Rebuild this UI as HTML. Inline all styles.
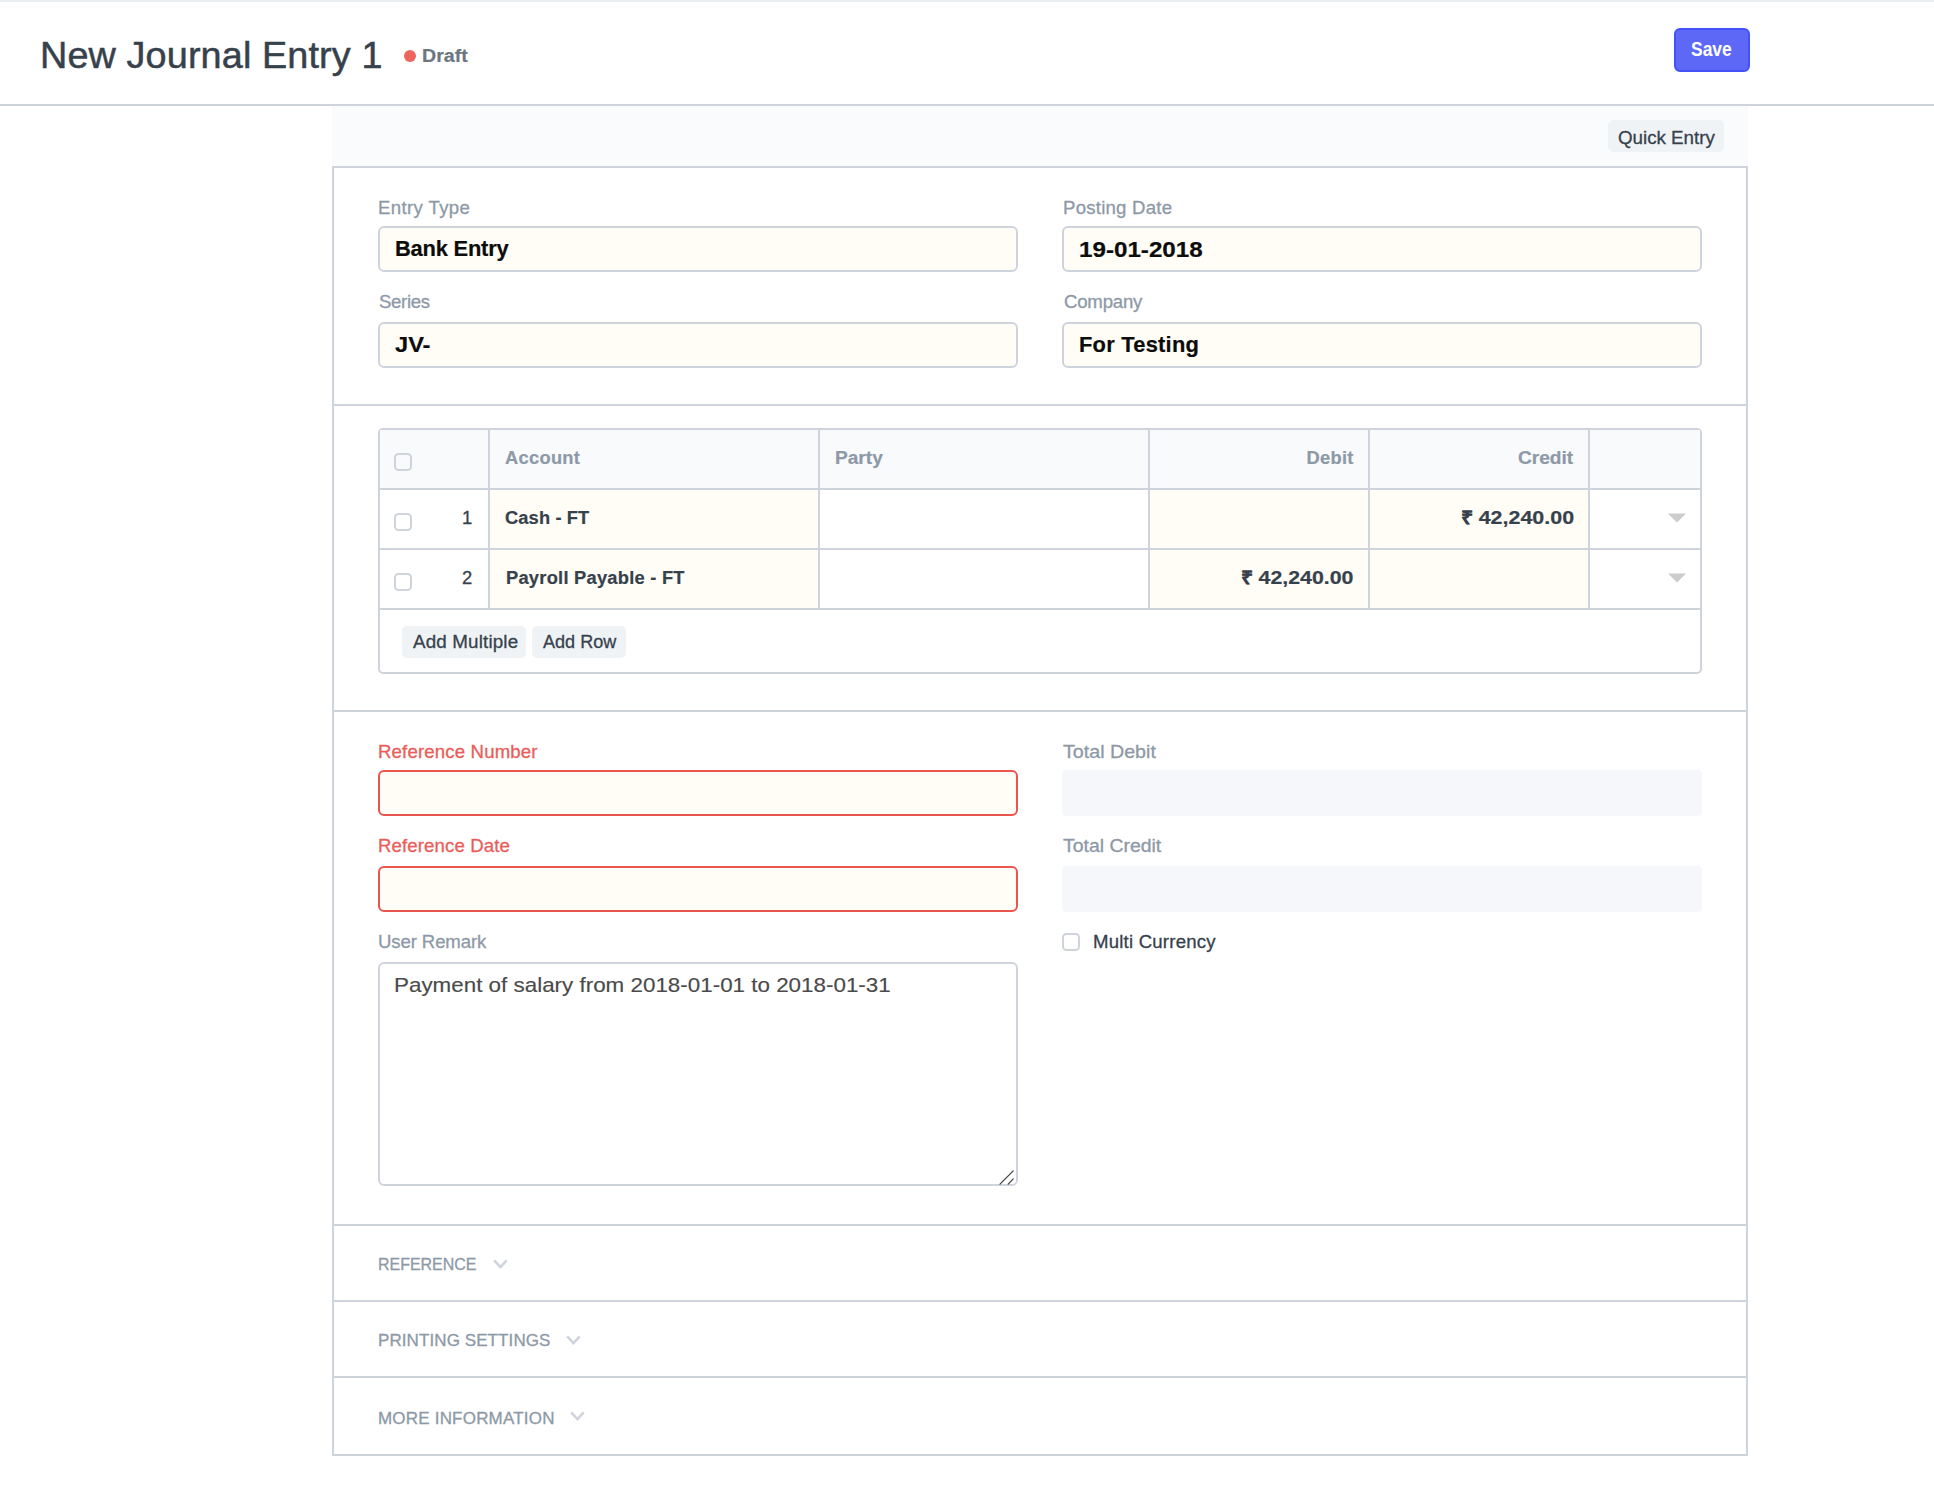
<!DOCTYPE html>
<html lang="en">
<head>
<meta charset="utf-8">
<title>New Journal Entry 1</title>
<style>
*{box-sizing:border-box;margin:0;padding:0}
html,body{width:1934px;height:1498px;background:#fff;overflow:hidden}
body{position:relative;font-family:"Liberation Sans",sans-serif;color:#36414c;-webkit-font-smoothing:antialiased}
.a{position:absolute;white-space:nowrap}
.lbl,.btxt,.num,.sec{-webkit-text-stroke:0.3px currentColor}
#rem{-webkit-text-stroke:0.15px currentColor}
.val,.th,.td,#draft{-webkit-text-stroke:0.2px currentColor}
#title{-webkit-text-stroke:0.5px currentColor}
.hl{position:absolute;height:2px;background:#cfd4dc}
.vl{position:absolute;width:2px;background:#cfd4dc}
.lbl{position:absolute;white-space:nowrap;font-size:18.2px;line-height:24px;color:#8d99a6}
.lbl.err{color:#ea5d59}
.inp{position:absolute;height:46px;width:640px;border:2px solid #cfd4dc;border-radius:6px;background:#fffdf5}
.inp.err{border-color:#e9554f}
.inp.ro{border:0;background:#f5f7fa;border-radius:4px}
.val{position:absolute;white-space:nowrap;font-size:20.3px;line-height:26px;font-weight:bold;color:#0c0c0c}
.btn{position:absolute;height:32px;border-radius:5px;background:#f0f3f6}
.btxt{position:absolute;white-space:nowrap;font-size:18.2px;line-height:24px;color:#36414c}
.cb{position:absolute;width:18px;height:18px;border:2px solid #cfd4dc;border-radius:4.5px;background:transparent}
.th{position:absolute;white-space:nowrap;font-size:17.8px;line-height:24px;font-weight:bold;color:#8d99a6}
.td{position:absolute;white-space:nowrap;font-size:17.8px;line-height:24px;font-weight:bold;color:#36414c}
.num{position:absolute;white-space:nowrap;font-size:18.2px;line-height:24px;color:#36414c}
.sec{position:absolute;white-space:nowrap;font-size:16.4px;line-height:22px;color:#8d99a6}
.cell{position:absolute;background:#fffdf5}
svg{position:absolute;overflow:visible}
</style>
</head>
<body>
<!-- top strip -->
<div class="a" style="left:0;top:0;width:1934px;height:2px;background:#ebeef1"></div>

<!-- page header -->
<div class="a" id="title" style="left:40px;top:33px;font-size:37.8px;letter-spacing:0.12px;line-height:44px;color:#36414c">New Journal Entry 1</div>
<div class="a" style="left:404px;top:50px;width:12px;height:12px;border-radius:50%;background:#ec645e"></div>
<div class="a" id="draft" style="left:422px;top:44px;font-size:18.3px;transform-origin:0 0;transform:scaleX(1.0715);line-height:24px;font-weight:bold;color:#6c7680">Draft</div>
<div class="a" style="left:1674px;top:28px;width:76px;height:44px;border:2px solid #4450f8;border-radius:6px;background:#5d69f6"></div>
<div class="a" id="save" style="left:1691px;top:37px;font-size:19.6px;transform-origin:0 0;transform:scaleX(0.8913);line-height:24px;font-weight:bold;color:#fff">Save</div>
<div class="hl" style="left:0;top:104px;width:1934px"></div>

<!-- toolbar -->
<div class="a" style="left:332px;top:106px;width:1416px;height:60px;background:#fafbfc"></div>
<div class="btn" style="left:1608px;top:120px;width:116px"></div>
<div class="btxt" id="qe" style="left:1618px;top:126px;font-size:18.8px;letter-spacing:-0.02px">Quick Entry</div>

<!-- form frame -->
<div class="hl" style="left:332px;top:166px;width:1416px"></div>
<div class="vl" style="left:332px;top:166px;height:1290px"></div>
<div class="vl" style="left:1746px;top:166px;height:1290px"></div>
<div class="hl" style="left:332px;top:404px;width:1416px"></div>
<div class="hl" style="left:332px;top:710px;width:1416px"></div>
<div class="hl" style="left:332px;top:1224px;width:1416px"></div>
<div class="hl" style="left:332px;top:1300px;width:1416px"></div>
<div class="hl" style="left:332px;top:1376px;width:1416px"></div>
<div class="hl" style="left:332px;top:1454px;width:1416px"></div>

<!-- section 1 -->
<div class="lbl" id="l1" style="left:378px;top:196px;font-size:18.6px;letter-spacing:0.37px">Entry Type</div>
<div class="inp" style="left:378px;top:226px"></div>
<div class="val" id="v1" style="left:395px;top:236px;font-size:21.9px;letter-spacing:-0.21px">Bank Entry</div>
<div class="lbl" id="l2" style="left:1063px;top:196px;font-size:18.6px;letter-spacing:0.23px">Posting Date</div>
<div class="inp" style="left:1062px;top:226px"></div>
<div class="val" id="v2" style="left:1079px;top:237px;font-size:21.9px;transform-origin:0 0;transform:scaleX(1.1045)">19-01-2018</div>
<div class="lbl" id="l3" style="left:379px;top:290px;font-size:18.6px;letter-spacing:-0.34px">Series</div>
<div class="inp" style="left:378px;top:322px"></div>
<div class="val" id="v3" style="left:395px;top:332px;font-size:21.9px;transform-origin:0 0;transform:scaleX(1.0788)">JV-</div>
<div class="lbl" id="l4" style="left:1064px;top:290px;font-size:18.6px;letter-spacing:-0.2px">Company</div>
<div class="inp" style="left:1062px;top:322px"></div>
<div class="val" id="v4" style="left:1079px;top:332px;font-size:21.9px;letter-spacing:0.23px">For Testing</div>

<!-- grid -->
<div class="a" style="left:378px;top:428px;width:1324px;height:246px;border:2px solid #cfd4dc;border-radius:5px;background:#fff"></div>
<div class="a" style="left:380px;top:430px;width:1320px;height:58px;background:#f9fafc;border-radius:1px 1px 0 0"></div>
<div class="cell" style="left:490px;top:490px;width:328px;height:118px"></div>
<div class="cell" style="left:1150px;top:490px;width:438px;height:118px"></div>
<div class="hl" style="left:380px;top:488px;width:1320px"></div>
<div class="hl" style="left:380px;top:548px;width:1320px"></div>
<div class="hl" style="left:380px;top:608px;width:1320px"></div>
<div class="vl" style="left:488px;top:430px;height:178px"></div>
<div class="vl" style="left:818px;top:430px;height:178px"></div>
<div class="vl" style="left:1148px;top:430px;height:178px"></div>
<div class="vl" style="left:1368px;top:430px;height:178px"></div>
<div class="vl" style="left:1588px;top:430px;height:178px"></div>

<div class="cb" style="left:394px;top:453px"></div>
<div class="cb" style="left:394px;top:513px"></div>
<div class="cb" style="left:394px;top:573px"></div>
<div class="th" id="h1" style="left:505px;top:446px;font-size:18.3px;letter-spacing:0.3px">Account</div>
<div class="th" id="h2" style="left:835px;top:446px;font-size:18.3px;transform-origin:0 0;transform:scaleX(1.0446)">Party</div>
<div class="th" id="h3" style="left:1306.55px;top:446px;font-size:18.3px;letter-spacing:0.3px">Debit</div>
<div class="th" id="h4" style="left:1517.61px;top:446px;font-size:18.3px;transform-origin:0 0;transform:scaleX(1.0453)">Credit</div>
<div class="num" id="n1" style="left:461.88px;top:506px;font-size:18.4px">1</div>
<div class="num" id="n2" style="left:461.88px;top:566px;font-size:18.4px">2</div>
<div class="td" id="c1" style="left:505px;top:506px;font-size:18.3px;letter-spacing:0.12px">Cash - FT</div>
<div class="td" id="c2" style="left:506px;top:566px;font-size:18.3px;letter-spacing:0.25px">Payroll Payable - FT</div>
<div class="td" id="a1" style="left:1460.94px;top:506px;font-size:18.3px;transform-origin:0 0;transform:scaleX(1.1729)">₹ 42,240.00</div>
<div class="td" id="a2" style="left:1240.94px;top:566px;font-size:18.3px;transform-origin:0 0;transform:scaleX(1.1667)">₹ 42,240.00</div>
<svg style="left:1668px;top:513px" width="18" height="10" viewBox="0 0 18 10"><path d="M0 0.5H18L9 9.5Z" fill="#ccc"/></svg>
<svg style="left:1668px;top:573px" width="18" height="10" viewBox="0 0 18 10"><path d="M0 0.5H18L9 9.5Z" fill="#ccc"/></svg>
<div class="btn" style="left:402px;top:626px;width:124px"></div>
<div class="btxt" id="b1" style="left:413px;top:630px;font-size:18.8px;letter-spacing:0.16px">Add Multiple</div>
<div class="btn" style="left:532px;top:626px;width:94px"></div>
<div class="btxt" id="b2" style="left:543px;top:630px;font-size:18.8px;transform-origin:0 0;transform:scaleX(0.9616)">Add Row</div>

<!-- section 3 -->
<div class="lbl err" id="l5" style="left:378px;top:740px;font-size:18.6px;letter-spacing:0.16px">Reference Number</div>
<div class="inp err" style="left:378px;top:770px"></div>
<div class="lbl err" id="l6" style="left:378px;top:834px;font-size:18.6px;letter-spacing:0.12px">Reference Date</div>
<div class="inp err" style="left:378px;top:866px"></div>
<div class="lbl" id="l7" style="left:378px;top:930px;font-size:18.6px;letter-spacing:-0.12px">User Remark</div>
<div class="inp" style="left:378px;top:962px;height:224px;background:#fff"></div>
<div class="a" id="rem" style="left:394px;top:972px;font-size:20.8px;transform-origin:0 0;transform:scaleX(1.0769);line-height:26px;color:#4a4a4a">Payment of salary from 2018-01-01 to 2018-01-31</div>
<svg style="left:998px;top:1168px" width="18" height="16" viewBox="0 0 18 16"><path d="M2 16.1L15.2 2.9M10.2 16.1L15.2 10.9" stroke="#444" stroke-width="1.3" stroke-linecap="round" fill="none"/></svg>

<div class="lbl" id="l8" style="left:1063px;top:740px;font-size:18.6px;transform-origin:0 0;transform:scaleX(1.0568)">Total Debit</div>
<div class="inp ro" style="left:1062px;top:770px"></div>
<div class="lbl" id="l9" style="left:1063px;top:834px;font-size:18.6px;transform-origin:0 0;transform:scaleX(1.0448)">Total Credit</div>
<div class="inp ro" style="left:1062px;top:866px"></div>
<div class="cb" style="left:1062px;top:933px"></div>
<div class="btxt" id="mc" style="left:1093px;top:930px;font-size:18.6px;letter-spacing:0.21px">Multi Currency</div>

<!-- collapsed sections -->
<div class="sec" id="s1" style="left:378px;top:1254px;font-size:17px;transform-origin:0 0;transform:scaleX(0.9385)">REFERENCE</div>
<svg style="left:493px;top:1259px" width="15" height="10" viewBox="0 0 15 10"><path d="M1.2 1.4L7.45 8.2L13.7 1.4" stroke="#cfd4dc" stroke-width="2.6" fill="none"/></svg>
<div class="sec" id="s2" style="left:378px;top:1330px;font-size:17px;letter-spacing:0.09px">PRINTING SETTINGS</div>
<svg style="left:566px;top:1335px" width="15" height="10" viewBox="0 0 15 10"><path d="M1.2 1.4L7.45 8.2L13.7 1.4" stroke="#cfd4dc" stroke-width="2.6" fill="none"/></svg>
<div class="sec" id="s3" style="left:378px;top:1408px;font-size:17px;letter-spacing:0.2px">MORE INFORMATION</div>
<svg style="left:570px;top:1411px" width="15" height="10" viewBox="0 0 15 10"><path d="M1.2 1.4L7.45 8.2L13.7 1.4" stroke="#cfd4dc" stroke-width="2.6" fill="none"/></svg>
</body>
</html>
